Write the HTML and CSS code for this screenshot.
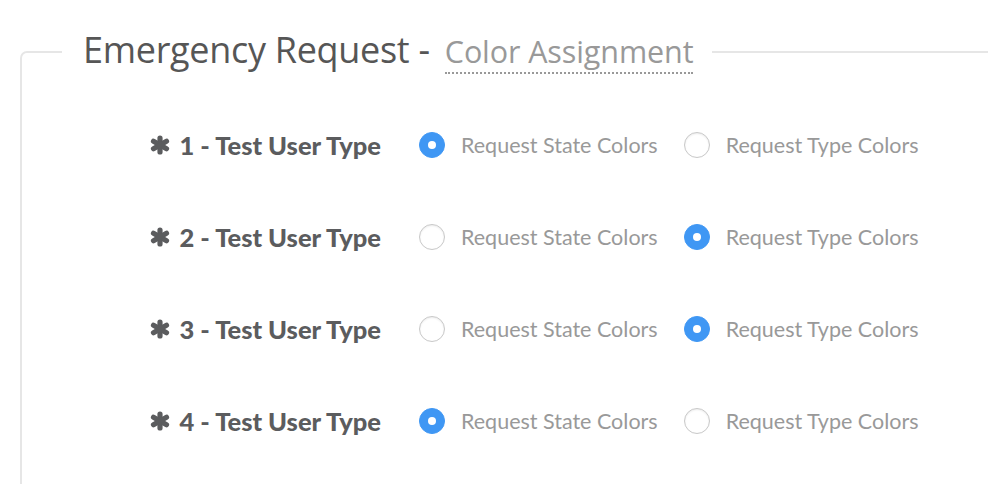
FILE: index.html
```html
<!DOCTYPE html>
<html>
<head>
<meta charset="utf-8">
<link rel="stylesheet" href="styles.css">
</head>
<body>
<fieldset class="panel">
  <legend class="legend"><span class="title">Emergency Request - </span><span class="subtitle">Color Assignment</span></legend>
  <div class="rows">
    <div class="row">
      <div class="label"><svg class="ast" viewBox="0 0 22 20"><g stroke="#5b5c5e" stroke-width="5.2" stroke-linecap="round"><line x1="11" y1="3" x2="11" y2="17"/><line x1="4.5" y1="6.3" x2="17.5" y2="13.7"/><line x1="4.5" y1="13.7" x2="17.5" y2="6.3"/></g></svg>1 - Test User Type</div>
      <div class="opt"><span class="radio on"></span><span class="text">Request State Colors</span></div>
      <div class="opt"><span class="radio"></span><span class="text">Request Type Colors</span></div>
    </div>
    <div class="row">
      <div class="label"><svg class="ast" viewBox="0 0 22 20"><g stroke="#5b5c5e" stroke-width="5.2" stroke-linecap="round"><line x1="11" y1="3" x2="11" y2="17"/><line x1="4.5" y1="6.3" x2="17.5" y2="13.7"/><line x1="4.5" y1="13.7" x2="17.5" y2="6.3"/></g></svg>2 - Test User Type</div>
      <div class="opt"><span class="radio"></span><span class="text">Request State Colors</span></div>
      <div class="opt"><span class="radio on"></span><span class="text">Request Type Colors</span></div>
    </div>
    <div class="row">
      <div class="label"><svg class="ast" viewBox="0 0 22 20"><g stroke="#5b5c5e" stroke-width="5.2" stroke-linecap="round"><line x1="11" y1="3" x2="11" y2="17"/><line x1="4.5" y1="6.3" x2="17.5" y2="13.7"/><line x1="4.5" y1="13.7" x2="17.5" y2="6.3"/></g></svg>3 - Test User Type</div>
      <div class="opt"><span class="radio"></span><span class="text">Request State Colors</span></div>
      <div class="opt"><span class="radio on"></span><span class="text">Request Type Colors</span></div>
    </div>
    <div class="row">
      <div class="label"><svg class="ast" viewBox="0 0 22 20"><g stroke="#5b5c5e" stroke-width="5.2" stroke-linecap="round"><line x1="11" y1="3" x2="11" y2="17"/><line x1="4.5" y1="6.3" x2="17.5" y2="13.7"/><line x1="4.5" y1="13.7" x2="17.5" y2="6.3"/></g></svg>4 - Test User Type</div>
      <div class="opt"><span class="radio on"></span><span class="text">Request State Colors</span></div>
      <div class="opt"><span class="radio"></span><span class="text">Request Type Colors</span></div>
    </div>
  </div>
</fieldset>
</body>
</html>
```
FILE: styles.css
```css
html, body {
  margin: 0;
  padding: 0;
  background: #fff;
  overflow: hidden;
}
body {
  width: 988px;
  height: 484px;
  font-family: "Open Sans", "Noto Sans", sans-serif;
}
.panel {
  box-sizing: border-box;
  margin: 24px -40px 0 20px;
  padding: 0;
  border: 2px solid #e6e6e6;
  border-bottom: none;
  border-radius: 7px 7px 0 0;
  min-width: 0;
  height: 460px;
}
.legend {
  margin-left: 40px;
  padding: 0 19px 0 21px;
  line-height: 48px;
  white-space: nowrap;
}
.title {
  font-size: 36px;
  color: #565656;
  font-weight: 400;
  letter-spacing: -0.3px;
  position: relative;
  top: 2px;
}
.subtitle {
  display: inline-block;
  line-height: 1.2;
  margin-left: 6px;
  font-size: 30.5px;
  color: #999;
  border-bottom: 2px dotted #999;
  padding-bottom: 2px;
  letter-spacing: -0.1px;
  position: relative;
  top: 2px;
}
.rows {
  display: flex;
  flex-direction: column;
  padding-top: 20px;
}
.row {
  display: flex;
  align-items: center;
  height: 92px;
}
.label {
  width: 359px;
  flex: none;
  display: flex;
  justify-content: flex-end;
  align-items: center;
  font-family: "Lato", sans-serif;
  font-weight: 900;
  font-size: 25.5px;
  color: #5b5c5e;
  letter-spacing: 0;
  white-space: nowrap;
}
.ast {
  width: 22px;
  height: 20px;
  margin-right: 8px;
}
.opt {
  display: flex;
  align-items: center;
  margin-left: 38px;
}
.opt + .opt {
  margin-left: 26px;
}
.radio {
  width: 24px;
  height: 24px;
  border-radius: 50%;
  border: 1px solid #c8c8c8;
  box-shadow: inset 0 1px 2px rgba(0,0,0,0.08);
  background: #fff;
  position: relative;
  flex: none;
}
.radio.on {
  background: #3f97f4;
  border-color: #3f97f4;
  box-shadow: none;
}
.radio.on::after {
  content: "";
  position: absolute;
  left: 50%;
  top: 50%;
  width: 8px;
  height: 8px;
  margin: -4px 0 0 -4px;
  border-radius: 50%;
  background: #fff;
}
.text {
  margin-left: 16px;
  font-family: "Lato", sans-serif;
  font-size: 21.5px;
  color: #999;
  white-space: nowrap;
}
```
